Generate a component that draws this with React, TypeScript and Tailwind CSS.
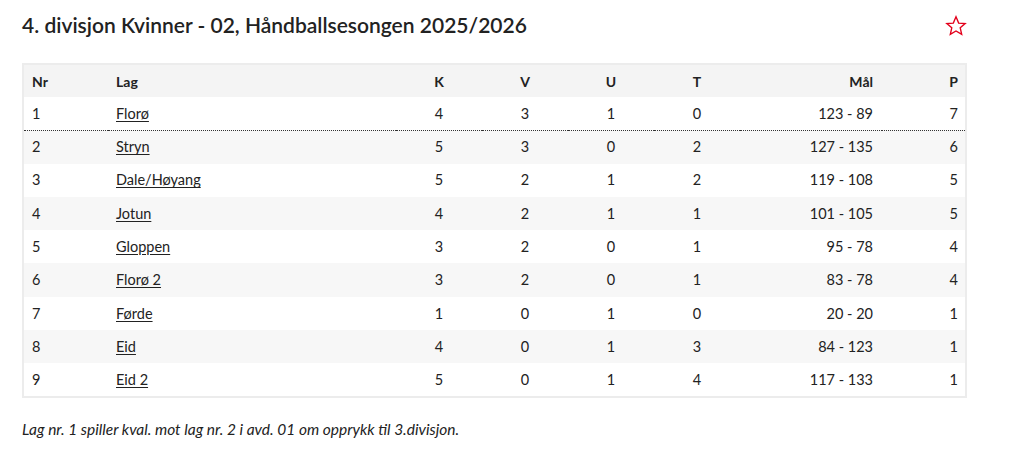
import React from "react";

const rows = [
  ["1", "Florø", "4", "3", "1", "0", "123 - 89", "7"],
  ["2", "Stryn", "5", "3", "0", "2", "127 - 135", "6"],
  ["3", "Dale/Høyang", "5", "2", "1", "2", "119 - 108", "5"],
  ["4", "Jotun", "4", "2", "1", "1", "101 - 105", "5"],
  ["5", "Gloppen", "3", "2", "0", "1", "95 - 78", "4"],
  ["6", "Florø 2", "3", "2", "0", "1", "83 - 78", "4"],
  ["7", "Førde", "1", "0", "1", "0", "20 - 20", "1"],
  ["8", "Eid", "4", "0", "1", "3", "84 - 123", "1"],
  ["9", "Eid 2", "5", "0", "1", "4", "117 - 133", "1"],
];

export default function App() {
  return (
    <div className="w-[1024px] h-[459px] bg-white text-[#222] font-['Lato','Liberation_Sans',sans-serif]">
      <div className="flex items-center justify-between pl-[22px] pr-[57px] pt-[6px] h-[46px]">
        <h1 className="text-[21px] font-semibold leading-none pb-[4px]">
          4. divisjon Kvinner - 02, Håndballsesongen 2025/2026
        </h1>
        <svg width="22" height="22" viewBox="0 0 24 24">
          <polygon
            points="12,2 14.9,8.8 22,9.3 16.6,14 18.2,21.2 12,17.4 5.8,21.2 7.4,14 2,9.3 9.1,8.8"
            fill="none"
            stroke="#e3001b"
            strokeWidth="1.5"
            strokeLinejoin="miter"
          />
        </svg>
      </div>
      <div className="pl-[22px] pt-[17px]">
        <table className="w-[943px] table-fixed border-collapse border-2 border-[#ececec] text-[14.5px]">
          <colgroup>
            <col className="w-[85px]" />
            <col className="w-[288px]" />
            <col className="w-[86px]" />
            <col className="w-[86px]" />
            <col className="w-[86px]" />
            <col className="w-[86px]" />
            <col className="w-[142px]" />
            <col className="w-[84px]" />
          </colgroup>
          <thead>
            <tr className="bg-[#f4f4f4] h-[33px] font-bold text-[14px]">
              <th className="text-left pl-[8px]">Nr</th>
              <th className="text-left pl-[8px]">Lag</th>
              <th className="text-center">K</th>
              <th className="text-center">V</th>
              <th className="text-center">U</th>
              <th className="text-center">T</th>
              <th className="text-right pr-[9px]">Mål</th>
              <th className="text-right pr-[7px]">P</th>
            </tr>
          </thead>
          <tbody>
            {rows.map((r, i) => (
              <tr
                key={i}
                className={
                  (i % 2 === 0 ? "bg-white" : "bg-[#f7f7f7]") +
                  " h-[33.3px]" +
                  (i === 0 ? " border-b border-dotted border-b-[#333]" : "")
                }
              >
                <td className="text-left pl-[8px]">{r[0]}</td>
                <td className="text-left pl-[8px]">
                  <a href="#" className="underline underline-offset-2">{r[1]}</a>
                </td>
                <td className="text-center">{r[2]}</td>
                <td className="text-center">{r[3]}</td>
                <td className="text-center">{r[4]}</td>
                <td className="text-center">{r[5]}</td>
                <td className="text-right pr-[9px]">{r[6]}</td>
                <td className="text-right pr-[7px]">{r[7]}</td>
              </tr>
            ))}
          </tbody>
        </table>
        <p className="italic text-[15.5px] text-[#222] mt-[20px]">
          Lag nr. 1 spiller kval. mot lag nr. 2 i avd. 01 om opprykk til 3.divisjon.
        </p>
      </div>
    </div>
  );
}
